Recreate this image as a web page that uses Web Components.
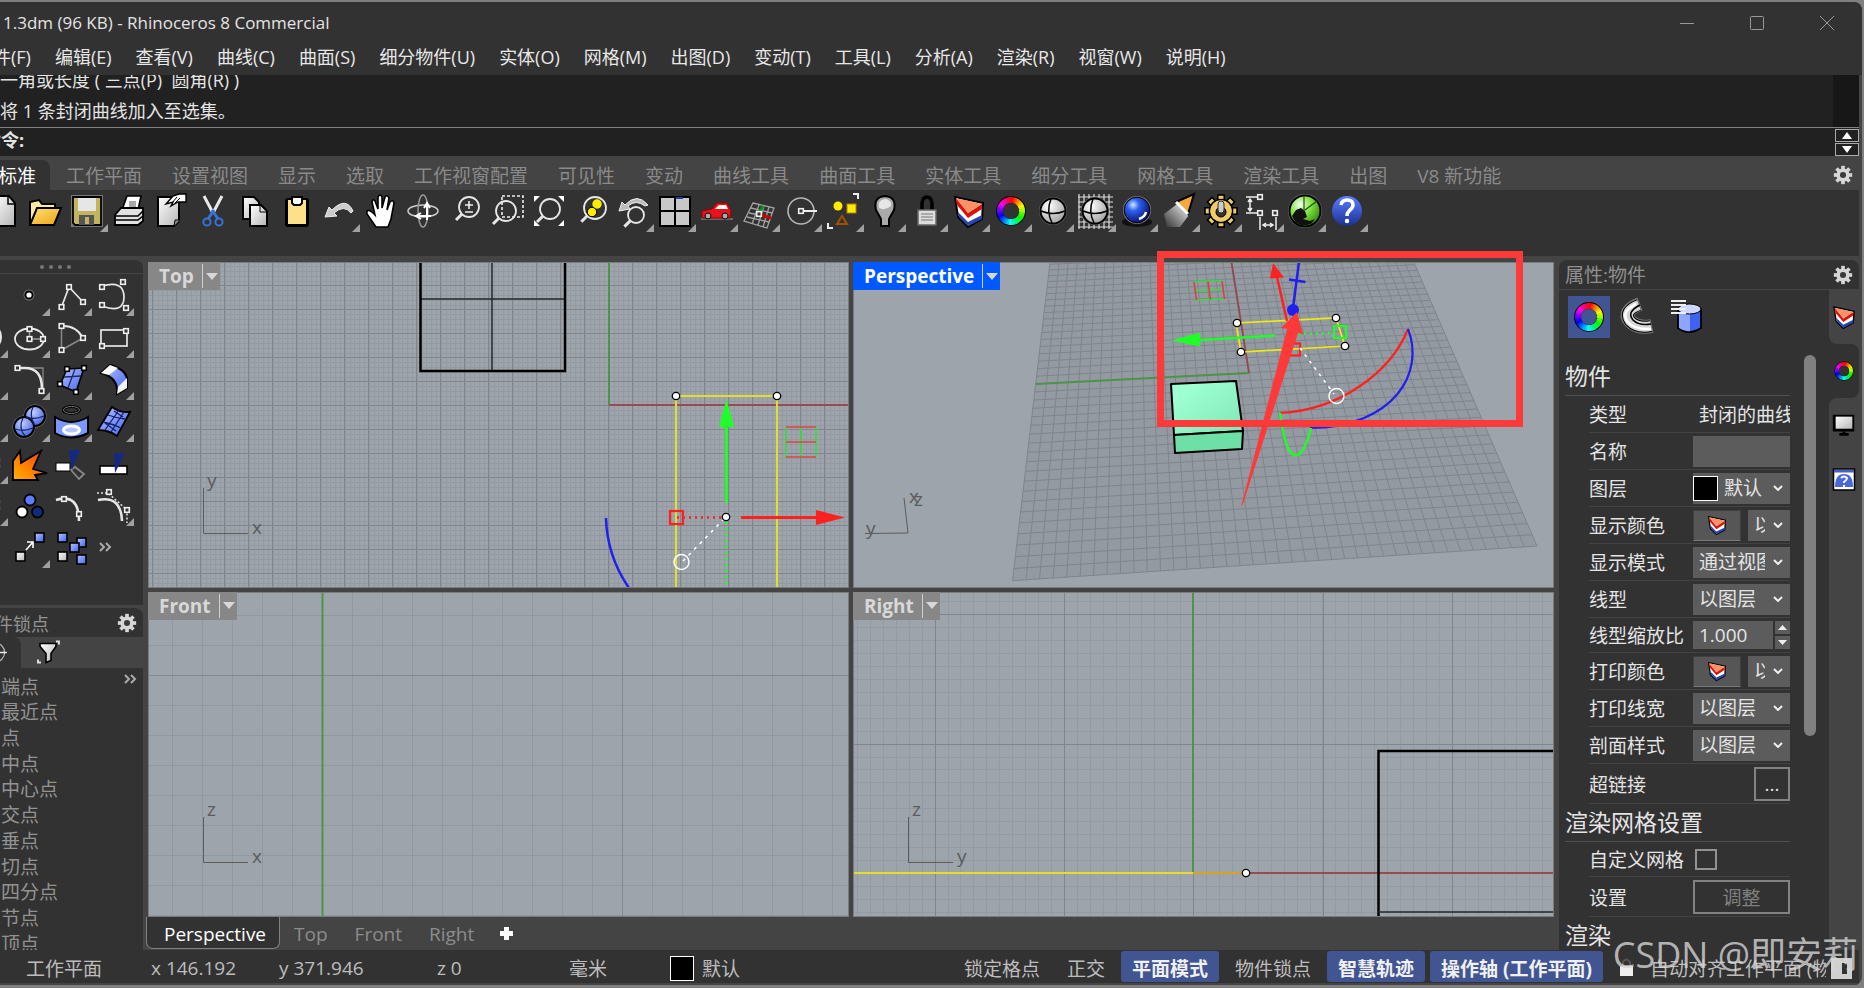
<!DOCTYPE html>
<html lang="zh-CN">
<head>
<meta charset="utf-8">
<title>1.3dm (96 KB) - Rhinoceros 8 Commercial</title>
<style>
  html, body { height: 100%; }
  body {
    margin: 0;
    overflow: hidden;
    background: #808080;
    color: #e4e4e4;
    font-family: "Open Sans", "Noto Sans CJK SC", sans-serif;
    font-size: 19px;
  }
</style>
</head>
<body>
<rhino-app></rhino-app>

<script>
(() => {
const DEFS = `
  <defs>
    <linearGradient id="blue" x1="0" y1="0" x2="1" y2="1"><stop offset="0" stop-color="#b9c6ff"/><stop offset="1" stop-color="#3f62f0"/></linearGradient>
    <linearGradient id="grey" x1="0" y1="0" x2="1" y2="1"><stop offset="0" stop-color="#fff"/><stop offset="1" stop-color="#b5b5b5"/></linearGradient>
    <linearGradient id="gold" x1="0" y1="0" x2="1" y2="1"><stop offset="0" stop-color="#ffe37a"/><stop offset="1" stop-color="#f0a010"/></linearGradient>
    <linearGradient id="fire" x1="0" y1="1" x2="1" y2="0"><stop offset="0" stop-color="#ffb400"/><stop offset="1" stop-color="#ff3c00"/></linearGradient>
    <linearGradient id="beam" x1="1" y1="0" x2="0" y2="1"><stop offset="0" stop-color="#fff"/><stop offset="1" stop-color="#fff" stop-opacity="0"/></linearGradient>
    <linearGradient id="help" x1="0" y1="0" x2="0" y2="1"><stop offset="0" stop-color="#5c7dff"/><stop offset="1" stop-color="#1a3193"/></linearGradient>
    <radialGradient id="ball" cx=".35" cy=".3" r=".8"><stop offset="0" stop-color="#cfe4ff"/><stop offset=".3" stop-color="#2d60f0"/><stop offset="1" stop-color="#04045c"/></radialGradient>
    <radialGradient id="pale" cx=".35" cy=".3" r=".8"><stop offset="0" stop-color="#fff"/><stop offset="1" stop-color="#9a9a9a"/></radialGradient>
    <radialGradient id="bball" cx=".4" cy=".3" r=".8"><stop offset="0" stop-color="#c3d0ff"/><stop offset="1" stop-color="#3455dd"/></radialGradient>
    <radialGradient id="leaf" cx=".35" cy=".3" r=".8"><stop offset="0" stop-color="#f4fff0"/><stop offset=".45" stop-color="#7fe03c"/><stop offset="1" stop-color="#2c7a08"/></radialGradient>
  </defs>`;

// square control point handles
const pts = (...list) => list.map(([x, y]) =>
  `<rect x="${x - 2.3}" y="${y - 2.3}" width="4.6" height="4.6" fill="#323232" stroke="#eee" stroke-width="1.6"/>`).join('');

// hue ring, drawn as short arcs
function wheel(r, w) {
  let out = `<circle r="${r + w / 2 + 1}" fill="#000"/>`;
  for (let i = 0; i < 36; i++) {
    const a = i * Math.PI / 18, b = (i + 1.15) * Math.PI / 18;
    out += `<path d="M${(r * Math.sin(a)).toFixed(2)} ${(-r * Math.cos(a)).toFixed(2)}A${r} ${r} 0 0 1 ${(r * Math.sin(b)).toFixed(2)} ${(-r * Math.cos(b)).toFixed(2)}" fill="none" stroke="hsl(${i * 10},100%,50%)" stroke-width="${w}"/>`;
  }
  return out + `<circle r="${r - w / 2}" fill="var(--hole, #323232)"/>`;
}

function gear(r, fill, extra = '') {
  let out = '';
  for (let i = 0; i < 8; i++) out += `<rect x="${-r * .2}" y="${-r}" width="${r * .4}" height="${r}" transform="rotate(${i * 45})" ${extra}/>`;
  return `<g fill="${fill}">${out}<circle r="${r * .72}" ${extra}/></g>`;
}

const MAG = (x, y, r) => `<circle cx="${x}" cy="${y}" r="${r}" fill="none" stroke="#e6e6e6" stroke-width="1.8"/>
  <path d="M${x - r * .7} ${y + r * .7}L${x - r * .7 - 6} ${y + r * .7 + 6}" stroke="#e6e6e6" stroke-width="3"/>`;
const CAKE = `<path d="M-14 -14L14 -8 13 8 -1 16 -11 6Z" fill="#fff" stroke="#000" stroke-width="2"/>
  <path d="M-13 -13L-1 2 13 -7V-2L-1 7 -12 -6Z" fill="#d81408"/>
  <path d="M-11 1L-1 11 13 4V8L-1 15 -10 6Z" fill="#2446b4"/><path d="M-13 -13L13 -7 -1 2Z" fill="#ff9166"/>`;
const GLOBE = `<circle r="14" fill="#666"/><circle r="12.5" fill="url(#pale)" stroke="#000" stroke-width="2"/>
  <path d="M-12 0Q0 5 12 0M-2 -12Q-7 0 -1 12" fill="none" stroke="#000" stroke-width="1.5"/>`;
const box = (x, y, fill) => `<rect x="${x}" y="${y}" width="9" height="9" fill="${fill}" stroke="#000" stroke-width="1.6"/>`;

const ICONS = {
  page: `<path d="M-10 -15H6L12 -8V15H-10Z" fill="url(#grey)" stroke="#000" stroke-width="2"/><path d="M5 -15V-7H12" fill="none" stroke="#000" stroke-width="1.5"/>`,
  folder: `<path d="M-15 14V-9L-6 -11 -3 -7H10V-3" fill="#ffe9a0" stroke="#000" stroke-width="2"/><path d="M-15 14L-8 -3H16L9 14Z" fill="url(#gold)" stroke="#000" stroke-width="2"/>`,
  save: `<rect x="-16" y="-16" width="32" height="32" fill="#777"/><path d="M-14 -14H14V14H-12L-14 12Z" fill="#c3b560" stroke="#000" stroke-width="1.8"/><rect x="-9" y="-13" width="18" height="13" fill="#e6e6e6"/><rect x="-8" y="4" width="15" height="10" fill="#555"/><rect x="-2" y="6" width="4" height="7" fill="#c3b560"/>`,
  print: `<path d="M-7 -1L-2 -15H12L9 -1Z" fill="#fff" stroke="#000" stroke-width="1.6"/><rect x="0" y="-10" width="7" height="6" fill="#aaa"/><path d="M-14 4L-8 -3H14V10L9 14H-14Z" fill="#e2e2e2" stroke="#000" stroke-width="1.8"/><path d="M-14 5H9L14 0M-14 9H9L14 5" fill="none" stroke="#000" stroke-width="1.6"/>`,
  props: `<path d="M-13 -14H8V10L3 15H-13Z" fill="url(#grey)" stroke="#000" stroke-width="2"/><path d="M3 15L4 9 9 9" fill="#888" stroke="#000"/><path d="M-5 -7L2 -15 8 -17H15V-9L7 -9 0 -5 2 -9Z" fill="#fff" stroke="#000" stroke-width="1.4"/><path d="M1 -8L6 -14M4 -8L9 -13" stroke="#000"/>`,
  cut: `<path d="M-9 -15L0 2M9 -15L0 2" stroke="#e9e9e9" stroke-width="3"/><path d="M-1 -1L5 8M1 -1L-5 8" stroke="#3673d8" stroke-width="3"/><circle cx="-6" cy="11" r="3.6" fill="none" stroke="#3673d8" stroke-width="2"/><circle cx="6" cy="11" r="3.6" fill="none" stroke="#3673d8" stroke-width="2"/>`,
  copy: `<path d="M-12 -14H-1L4 -9V8H-12Z" fill="url(#grey)" stroke="#000" stroke-width="2"/><path d="M-5 -6H6L12 0V15H-5Z" fill="url(#grey)" stroke="#000" stroke-width="2"/><path d="M5 -6V1H12" fill="none" stroke="#000"/>`,
  paste: `<rect x="-12" y="-13" width="24" height="29" rx="3" fill="#000"/><rect x="-9" y="-11" width="18" height="24" fill="#ffe08a"/><path d="M-5 -14H5V-8L3 -6H-3L-5 -8Z" fill="#fff" stroke="#000" stroke-width="2"/>`,
  undo: `<path d="M14 0Q7 -15 -7 -1L-10 -4 -14 6 -2 5 -5 2Q5 -7 12 2Z" fill="#ccc" stroke="#eee"/>`,
  hand: `<path d="M-5 16L-14 3Q-15 -3 -9 1L-6 4 -9 -9Q-8 -13 -6 -10L-3 -2 -3 -14Q-1 -18 1 -14L1 -3 4 -14Q6 -17 8 -13L6 -1 9 -9Q12 -12 13 -8L10 8 7 16Z" fill="#fff" stroke="#000" stroke-width="1.6"/>`,
  orbit: `<ellipse rx="15" ry="6" fill="none" stroke="#ccc" stroke-width="1.5"/><ellipse rx="5" ry="16" fill="none" stroke="#999" stroke-width="1.5"/><path d="M4 9V-7M1 -3L4 -8 7 -3M8 5H-6M-2 2L-7 5 -2 8" fill="none" stroke="#fff" stroke-width="2"/>`,
  zoom: MAG(4, -4, 10) + `<path d="M0 -6H8M4 -10V-2M0 1H8" stroke="#eee" stroke-width="1.6"/>`,
  zoomWindow: `<rect x="-5" y="-15" width="21" height="21" fill="none" stroke="#eee" stroke-width="1.6" stroke-dasharray="3 2"/>` + MAG(-1, 0, 10),
  zoomAll: MAG(1, -2, 10) + `<path d="M-15 -15H-9L-15 -9ZM15 -15H9L15 -9ZM-15 15H-9L-15 9ZM15 15H9L15 9Z" fill="#fff"/>`,
  zoomSel: MAG(4, -3, 11) + `<circle cx="6" cy="-7" r="4.7" fill="#ffec00"/><circle cx="1" cy="1" r="4.7" fill="#ffec00" stroke="#000"/>`,
  undoView: `<path d="M15 -6Q4 -19 -8 -6L-11 -9 -14 0 -3 -2 -5 -5Q3 -12 12 -5Z" fill="#bbb" stroke="#eee"/>` + MAG(3, 4, 8),
  views: `<rect x="-16" y="-15" width="32" height="31" fill="#777"/><rect x="-15" y="-14" width="30" height="29" fill="#c8c8c8" stroke="#000" stroke-width="2"/><path d="M0 -14V15M-15 0H15" stroke="#000" stroke-width="2"/><path d="M1 -13H8" stroke="#1c3fa8" stroke-width="2"/>`,
  car: `<path d="M-16 8H16" stroke="#666" stroke-width="2"/><path d="M-15 6V0L-5 -2 0 -8H10L14 0 13 7H-14Z" fill="#e8121b" stroke="#900"/><path d="M-2 -2L2 -6H9L11 -2Z" fill="#fff"/><circle cx="-9" cy="5" r="3" fill="#aaa" stroke="#000"/><circle cx="8" cy="5" r="3" fill="#aaa" stroke="#000"/>`,
  cplane: `<g fill="none" stroke="#a2a2a2" stroke-width="1.3"><path d="M-6 -8L15 -3 8 17 -15 10ZM-8 -3L13 2M-10 2L12 6M-12 6L10 11M0 -6L-7 13M5 -5L-1 14M10 -4L4 16"/></g><path d="M0 2L4 -5" stroke="#0a8f18" stroke-width="3"/><path d="M2 4L12 7" stroke="#c80000" stroke-width="3"/>` + pts([0, 3]),
  target: `<circle cx="0" cy="0" r="13" fill="none" stroke="#b5b5b5" stroke-width="1.6"/><path d="M0 0H16" stroke="#eee" stroke-width="2"/>` + pts([0, 0]),
  select: `<circle cx="-5" cy="-5" r="4.5" fill="#ffec00"/><rect x="4" y="-7" width="9" height="9" fill="#ffec00" stroke="#b88000"/><path d="M-6 13L-1 5 4 13Z" fill="none" stroke="#a05000" stroke-width="2"/><path d="M10 -17H15V-12M-15 12V17H-10" fill="none" stroke="#eee" stroke-width="2"/>`,
  bulb: `<path d="M-4 15V8L-9 -1Q-12 -14 0 -15 12 -14 9 -1L4 8V15Z" fill="#aaa" stroke="#000" stroke-width="2"/><path d="M-6 -3Q-8 -11 0 -12 7 -11 6 -5Q0 0 -6 -3Z" fill="#fff" opacity=".7"/>`,
  lock: `<path d="M-5 0V-8Q-4 -14 0 -14T5 -8V0" fill="none" stroke="#000" stroke-width="3.5"/><rect x="-9" y="-1" width="18" height="15" fill="#ddd" stroke="#666" stroke-width="1.5"/><path d="M-6 3H6M-6 6H6M-6 9H6" stroke="#777"/>`,
  cake: CAKE,
  wheel: wheel(11, 6),
  globe: GLOBE,
  globeGrid: `<path d="M-17 -14H18M-17 -9H18M-17 -4H18M-17 1H18M-17 6H18M-17 11H18M-17 16H18M-16 -17V18M-11 -17V18M-6 -17V18M-1 -17V18M4 -17V18M9 -17V18M14 -17V18" stroke="#ddd" stroke-width="1.2"/>` + GLOBE,
  ball: `<ellipse cy="11" rx="15" ry="5" fill="#111"/><circle r="14" cy="-1" fill="#777"/><circle cy="-1" r="12.8" fill="url(#ball)" stroke="#000"/><path d="M2 8Q8 6 9 1" stroke="#fff" stroke-width="2.5" fill="none"/>`,
  spot: `<path d="M2 -10L10 4 1 16H-12L-15 3Z" fill="url(#beam)"/><path d="M-3 -9L15 -17 9 3Z" fill="#f5a93a" stroke="#000" stroke-width="2"/><path d="M-3 -9L9 3" stroke="#fff" stroke-width="3"/>`,
  gear: gear(16, '#f0cc66', 'stroke="#000" stroke-width="1.6"') + `<circle r="10.5" fill="#f0cc66"/><circle r="5" cy="1" fill="#333" stroke="#000"/><rect x="-3" y="-10" width="6" height="12" rx="3" fill="#ccc" stroke="#333"/>`,
  dims: `<path d="M-17 -14H-4M-17 2H-4M-13 -11V-1M-15 -9L-13 -12 -11 -9M-15 -3L-13 0 -11 -3M-3 6V19M13 6V19M0 14H10M3 12L0 14 3 16M7 12L10 14 7 16" fill="none" stroke="#eee" stroke-width="1.5"/>` + pts([-3, -14], [-3, 2], [12, 2]),
  hopper: `<circle r="17" fill="#777"/><circle r="15.5" fill="url(#leaf)" stroke="#000" stroke-width="2"/><path d="M-9 -1L-4 -3 0 0 2 6 -2 8 5 10 10 8 6 13Q-8 18 -13 5Z" fill="#111"/><path d="M-1 0V-14M0 -1L12 -10" stroke="#1b5206" stroke-width="1.2"/>`,
  help: `<circle r="15" fill="url(#help)"/><path d="M-6 -6Q-5 -11 0 -11 6 -11 6 -6 6 -3 2 0 0 2 0 5" fill="none" stroke="#fff" stroke-width="3.5"/><circle cy="10" r="2.2" fill="#fff"/>`,

  arrow: `<path d="M-10 -10L6 5H-3L-8 12Z" fill="#fff"/>`,
  point: `<circle r="5.5" fill="#777"/><circle r="3.6" fill="#fff" stroke="#000" stroke-width="2"/>`,
  polyline: `<path d="M-9.5 12L-2 -8 12 7" fill="none" stroke="#e6e6e6" stroke-width="1.7"/>` + pts([-9.5, 12], [-2, -8], [12, 7]),
  curve: `<path d="M-11 -9Q11 -15 11 2T-11 11" fill="none" stroke="#e6e6e6" stroke-width="1.7"/>` + pts([-11, -8], [10, -13], [-11, 10], [13, 13]),
  circle: `<circle r="14" fill="none" stroke="#e6e6e6" stroke-width="2"/>`,
  ellipse: `<ellipse cx=".5" cy="2" rx="14.5" ry="10.5" fill="none" stroke="#e6e6e6" stroke-width="1.8"/><path d="M.5 -8V2H14" fill="none" stroke="#999" stroke-width="1.5"/>` + pts([.5, -8], [.5, 2], [14, 2]),
  arc: `<path d="M-9.5 13V-11" stroke="#888" stroke-width="1.5"/><path d="M-9.5 13L12 1" stroke="#888" stroke-width="1.5"/><path d="M-9.5 -11Q5 -12 12 1" fill="none" stroke="#e6e6e6" stroke-width="2"/>` + pts([-9.5, -11], [12, 1], [-9.5, 13]),
  rect: `<rect x="-12" y="-7" width="26" height="16" fill="none" stroke="#e6e6e6" stroke-width="1.7"/>` + pts([13, -6], [-11, 9]),
  fillet: `<path d="M-2 -11H14V10" fill="none" stroke="#888" stroke-width="1.3"/><path d="M-10 -11H-4Q13 -11 13 10" fill="none" stroke="#e6e6e6" stroke-width="2.6"/>` + pts([-11.5, -11], [12.5, 12]),
  surface: `<path d="M-4 -10L13 -11 5 13 -11 6Z" fill="url(#blue)" stroke="#000" stroke-width="1.6"/><path d="M4 -10L-3 9M-7 -2L10 -3" stroke="#222a66" stroke-width="1.3"/>` + pts([-4, -10], [13, -11], [-11, 5], [5, 13]).replace(/#323232/g, '#fff').replace(/#eee/g, '#000'),
  loft: `<path d="M-12 -6L-3 -14Q12 -10 14 -1V9L4 15Q6 -1 -12 -6Z" fill="url(#blue)" stroke="#000" stroke-width="2"/><path d="M-12 -6L-3 -14 5 -11 -4 -4Z" fill="#fff"/><path d="M4 15L5 8 14 -1V9Z" fill="#f2f2f2"/>`,
  spheres: `<circle cx="6" cy="-5" r="11.5" fill="#777"/><circle cx="-5" cy="6" r="11.5" fill="#777"/><circle cx="6" cy="-5" r="10" fill="url(#bball)" stroke="#000" stroke-width="2"/><circle cx="-5" cy="6" r="10" fill="url(#bball)" stroke="#000" stroke-width="2"/><path d="M-14 8Q-5 11 4 7M-6 -3Q-11 7 -4 15M-3 -4Q6 -1 15 -5M4 -14Q0 -6 5 3" fill="none" stroke="#15206a" stroke-width="1.2"/>`,
  project: `<ellipse cx=".5" cy="-11" rx="8" ry="3.5" fill="none" stroke="#000" stroke-width="3"/><ellipse cx=".5" cy="-11" rx="8" ry="3.5" fill="none" stroke="#777" stroke-width="1"/><path d="M-16 -4Q0 6 17 -4V12Q0 21 -16 12Z" fill="#7a98ff" stroke="#000" stroke-width="2"/><ellipse cx=".5" cy="9" rx="8" ry="4" fill="#b7c6ff" stroke="#fff" stroke-width="3"/>`,
  mesh: `<path d="M-15 9L-1 -14Q7 -8 17 -9L4 15Q-4 9 -15 9Z" fill="url(#blue)" stroke="#000" stroke-width="1.8"/><path d="M-10 1Q0 3 8 7M-5 -6Q3 -3 12 -2M6 -11L-8 9M11 -9L-2 11M1 -10L10 -4M-8 2L3 10" fill="none" stroke="#15206a" stroke-width="1.3"/>`,
  explode: `<path d="M-16 17V-2L-9 -12 -8 0 12 -12 4 6 18 10 6 12 9 17Z" fill="url(#fire)" stroke="#000" stroke-width="1.8"/>`,
  trim: `<rect x="-15" y="0" width="14" height="8" fill="#fff" stroke="#000"/><path d="M0 7L4 4 13 11 8 16Z" fill="none" stroke="#888" stroke-width="1.8"/><path d="M-2 -13H9L1 7Z" fill="#142a80"/>`,
  split: `<rect x="-13" y="3" width="27" height="8" fill="#fff" stroke="#000" stroke-width="1.6"/><path d="M1 -10H12L2 10Z" fill="#142a80"/>`,
  group: `<circle cx="1" cy="-5" r="5.5" fill="#5c7dff" stroke="#000" stroke-width="1.8"/><circle cx="-7" cy="7" r="5.5" fill="#fff" stroke="#000" stroke-width="1.8"/><circle cx="8.5" cy="7" r="5.5" fill="#142a80" stroke="#000" stroke-width="1.8"/>`,
  editPts: `<path d="M-15 -5Q8 -12 8 16" fill="none" stroke="#e6e6e6" stroke-width="2.6"/>` + pts([-7, -6], [8, 9]),
  rebuild: `<path d="M-15 -5Q8 -10 9 16" fill="none" stroke="#e6e6e6" stroke-width="2.6"/><path d="M-16 -12H-5L14 5V18" fill="none" stroke="#ddd" stroke-width="1.6" stroke-dasharray="2 2"/>` + pts([-4, -13], [14, 5]),
  move: box(-13, 5, 'url(#grey)') + box(6, -14, 'url(#blue)') + `<path d="M-3 3L4 -5M-2 -5H4V1" fill="none" stroke="#fff" stroke-width="1.6"/>`,
  array: box(-13, -14, 'url(#blue)') + box(6, -9, 'url(#blue)') + box(-1, -4, 'url(#blue)') + box(-13, 5, 'url(#grey)') + box(6, 8, 'url(#blue)'),
  more: `<path d="M-13 -4L-9 0 -13 4M-7 -4L-3 0 -7 4" fill="none" stroke="#aaa" stroke-width="2"/>`,
  blank: `<rect x="-10" y="-9" width="23" height="17" rx="2" fill="#777"/>`,

  cog: gear(12, '#d6d6d6') + `<circle r="4" fill="#3a3a3a"/>`,
  filter: `<path d="M-8 -9H8V-6L3 1V8L-2 10V1L-8 -6Z" fill="url(#grey)" stroke="#000" stroke-width="1.6"/><path d="M8 -11H11V-8M-10 7V10H-7" fill="none" stroke="#ddd" stroke-width="2"/>`,
  pipe: `<g fill="none"><path d="M3 -13Q-15 -6 -7 4 1 12 15 9" stroke="#777" stroke-width="14"/><path d="M2 -12Q-14 -6 -7 4 1 12 14 9" stroke="#000" stroke-width="12"/><path d="M2 -12Q-14 -6 -7 4 1 12 14 9" stroke="#d6d6d6" stroke-width="10"/><path d="M-1 -13Q-16 -6 -10 4 -3 13 14 12" stroke="#fff" stroke-width="2.5"/><path d="M3 -12Q-11 -5 -4 3 2 9 14 7" stroke="#000" stroke-width="1.6"/></g>`,
  cylinder: `<path d="M-7 -8V11Q4 19 16 11V-8Z" fill="#3f62f0" stroke="#000" stroke-width="1.8"/><path d="M-6 -7V11Q0 15 5 14V-5Z" fill="#8fa5ff"/><ellipse cx="4.5" cy="-8" rx="11.5" ry="5" fill="#cdd7ff" stroke="#000"/><path d="M-14 -16H1M-14 -12H1M-14 -8H1M-14 -4H1" stroke="#eee" stroke-width="1.8"/>`,
  monitor: `<rect x="-12" y="-11" width="23" height="18" fill="#000"/><rect x="-9" y="-9" width="18" height="13" fill="url(#grey)"/><path d="M-5 10H5M0 7V11" stroke="#000" stroke-width="3"/>`,
  helpPane: `<rect x="-10.5" y="-10" width="21" height="21" fill="#fff" stroke="#000" stroke-width="1.5"/><rect x="-10" y="-9" width="20" height="2.5" fill="#4a5fc4"/><path d="M-9 8Q-9 -5 0 -5T9 8Z" fill="#4a68dc"/><path d="M-3 -1Q0 -4 3 -1 3 1 0 3V4M0 6V8" fill="none" stroke="#fff" stroke-width="2"/>`
};

function define(name, html) {
  customElements.define(name, class extends HTMLElement {
    connectedCallback() {
      if (this.shadowRoot) return;
      this.attachShadow({ mode: 'open' });
      this.shadowRoot.innerHTML = typeof html === 'function' ? html(this) : html;
    }
  });
}

define('rhino-icon', el => `
  <style>
    :host { display: block; width: 42px; height: 42px; flex: none; }
    svg { display: block; width: 100%; height: 100%; overflow: visible; }
  </style>
  <svg viewBox="-21 -21 42 42" aria-hidden="true">${DEFS}
    <g transform="scale(${el.getAttribute('scale') || 1})">${ICONS[el.getAttribute('name')]}</g>
  </svg>`);

define('rhino-tool', el => `
  <style>
    :host { display: block; flex: none; }
    button { display: block; position: relative; width: 42px; height: 42px; padding: 0; border: 0; background: none; }
    i { position: absolute; right: 0; bottom: 0; border-style: solid; border-width: 0 0 8px 8px; border-color: transparent transparent #a0a0a0; }
  </style>
  <button aria-label="${el.getAttribute('name')}"><rhino-icon name="${el.getAttribute('name')}"></rhino-icon>${el.hasAttribute('more') ? '<i></i>' : ''}</button>`);

// "name+" marks a tool with a fly-out
const tools = list => list.split(' ').map(t => `<rhino-tool name="${t.replace('+', '')}"${t.endsWith('+') ? ' more' : ''}></rhino-tool>`).join('');

define('rhino-titlebar', `
  <style>
    :host { display: flex; align-items: center; height: 41px; padding-left: 3px; font-size: 17px; }
    span { flex: 1; }
    button { width: 70px; height: 40px; padding: 0; border: 0; background: none; }
    svg { display: block; margin: auto; }
  </style>
  <span>1.3dm (96 KB) - Rhinoceros 8 Commercial</span>
  <button aria-label="minimize"><svg width="16" height="16" fill="none" stroke="#999"><path d="M1 8.5H15"/></svg></button>
  <button aria-label="maximize"><svg width="16" height="16" fill="none" stroke="#999"><rect x="1.5" y="1.5" width="13" height="13" rx="1"/></svg></button>
  <button aria-label="close"><svg width="16" height="16" fill="none" stroke="#999"><path d="M1 1L15 15M15 1L1 15"/></svg></button>`);

define('rhino-menubar', `
  <style>
    :host { display: block; height: 32px; }
    nav { display: flex; gap: 24px; margin-left: -25px; }
    a { color: #e8e8e8; text-decoration: none; font-size: 18px; line-height: 28px; white-space: nowrap; }
  </style>
  <nav>${'文件(F) 编辑(E) 查看(V) 曲线(C) 曲面(S) 细分物件(U) 实体(O) 网格(M) 出图(D) 变动(T) 工具(L) 分析(A) 渲染(R) 视窗(W) 说明(H)'.split(' ').map(m => `<a href="#">${m}</a>`).join('')}</nav>`);

define('rhino-command', `
  <style>
    :host { display: block; margin-right: 3px; background: #212121; font-size: 18px; }
    .history { height: 52px; display: flex; border-bottom: 1px solid #808080; overflow: hidden; }
    .lines { flex: 1; display: flex; flex-direction: column; justify-content: flex-end; line-height: 31px; white-space: pre; }
    .track { width: 26px; background: #171717; }
    .prompt { display: flex; align-items: center; height: 28px; line-height: 24px; font-weight: bold; }
    label { margin-left: -17px; padding-bottom: 4px; }
    input { flex: 1; height: 24px; border: 0; outline: 0; background: none; color: inherit; font: inherit; }
    .step { display: grid; gap: 1px; width: 24px; }
    button { height: 13px; padding: 0; border: 1px solid #aaa; background: #212121; display: grid; place-items: center; }
  </style>
  <div class="history"><div class="lines"><div>一角或长度 ( 三点(P)  圆角(R) )</div><div>将 1 条封闭曲线加入至选集。</div></div><div class="track"></div></div>
  <div class="prompt"><label for="cmd">指令:</label><input id="cmd">
    <div class="step">
      <button aria-label="up"><svg width="10" height="7"><path d="M5 0L10 7H0Z" fill="#fff"/></svg></button>
      <button aria-label="down"><svg width="10" height="7"><path d="M5 7L10 0H0Z" fill="#fff"/></svg></button>
    </div>
  </div>`);

define('rhino-toolbar', `
  <style>
    :host { display: block; margin-right: 3px; }
    .tabs { display: flex; height: 34px; background: #444; }
    .tabs a { color: #8a8a8a; text-decoration: none; line-height: 40px; margin-right: 30px; white-space: nowrap; }
    .tabs a.on { width: 50px; height: 30px; margin: 4px 16px 0 0; line-height: 32px; text-indent: -2px; background: #323232; color: #fff; border-radius: 0 8px 0 0; }
    .tabs rhino-icon { width: 32px; height: 38px; margin-left: auto; }
    .icons { display: flex; height: 66px; background: #323232; }
    .icons > :first-child { margin-left: -18px; }
  </style>
  <div class="tabs"><a class="on" href="#">标准</a>${'工作平面,设置视图,显示,选取,工作视窗配置,可见性,变动,曲线工具,曲面工具,实体工具,细分工具,网格工具,渲染工具,出图,V8 新功能'.split(',').map(t => `<a href="#">${t}</a>`).join('')}<rhino-icon name="cog"></rhino-icon></div>
  <div class="icons">${tools('page folder save+ print props cut copy paste undo+ hand orbit zoom zoomWindow zoomAll zoomSel undoView+ views+ car+ cplane+ target+ select+ bulb+ lock+ cake+ wheel+ globe+ globeGrid+ ball+ spot+ gear+ dims+ hopper+ help+')}</div>`);

define('rhino-toolbox', `
  <style>
    :host { display: block; height: 345px; background: #323232; border-radius: 0 8px 0 0; overflow: hidden; }
    .grip { display: flex; justify-content: center; gap: 5px; padding: 5px 32px 4px 0; border-bottom: 1px solid #444; }
    .grip i { width: 4px; height: 4px; background: #777; border-radius: 2px; }
    .grid { display: grid; grid-template-columns: repeat(4, 42px); margin-left: -34px; }
  </style>
  <div class="grip"><i></i><i></i><i></i><i></i></div>
  <div class="grid">${tools('arrow point+ polyline+ curve+ circle+ ellipse+ arc+ rect+ blank+ fillet+ surface+ loft+ blank+ spheres+ project+ mesh+ globe+ explode trim split globe+ group editPts rebuild+ blank move+ array more')}</div>`);

define('rhino-osnap', `
  <style>
    :host { display: flex; flex-direction: column; flex: 1; min-height: 0; background: #323232; border-radius: 0 8px 0 0; overflow: hidden; color: #929292; }
    header { display: flex; align-items: center; justify-content: space-between; height: 29px; font-size: 18px; }
    header span { margin-left: -23px; }
    header rhino-icon { width: 32px; height: 32px; }
    .tabs { display: flex; height: 31px; background: #444; }
    .tabs button { border: 0; padding: 0; width: 54px; height: 31px; background: none; }
    .tabs .on { width: 21px; background: #323232; border-radius: 0 8px 0 0; }
    .tabs rhino-icon { width: 54px; height: 31px; }
    .tabs .on rhino-icon { width: 42px; margin-left: -26px; }
    .body { display: flex; flex: 1; min-height: 0; padding-top: 5px; }
    ul { flex: 1; display: flex; flex-direction: column; margin: 0 0 -6px -22px; padding: 0; list-style: none; }
    li { flex: 1; min-height: 0; }
    label { display: flex; align-items: center; height: 25px; gap: 7px; white-space: nowrap; }
    input { margin: 0; width: 16px; height: 16px; }
  </style>
  <header><span>物件锁点</span><rhino-icon name="cog"></rhino-icon></header>
  <div class="tabs"><button class="on" aria-label="osnap"><rhino-icon name="target"></rhino-icon></button><button aria-label="filter"><rhino-icon name="filter" scale="1.35"></rhino-icon></button></div>
  <div class="body">
    <ul>${'端点 最近点 点 中点 中心点 交点 垂点 切点 四分点 节点 顶点'.split(' ').map(s => `<li><label><input type="checkbox">${s}</label></li>`).join('')}</ul>
    <svg width="20" height="11" fill="none" stroke="#aaa" stroke-width="2"><path d="M2 2L6 6 2 10M8 2L12 6 8 10"/></svg>
  </div>`);

// horizontal and vertical lines for the flat views; coordinates share the canvas origin
function lines(x0, y0, step, color) {
  let d = '';
  for (let x = x0; x < 1600; x += step) d += `M${Math.round(x) + .5} 250V930`;
  for (let y = y0; y < 930; y += step) d += `M140 ${Math.round(y) + .5}H1600`;
  return `<path d="${d}" fill="none" stroke="${color}"/>`;
}

// construction plane seen in perspective: maps the unit square on its near half
function plane() {
  const [x0, y0, x1, y1, x2, y2, x3, y3] = [1012.5, 580.7, 1537, 546, 1457, 361.7, 1035.7, 384];
  const dx1 = x1 - x2, dx2 = x3 - x2, sx = x0 - x1 + x2 - x3;
  const dy1 = y1 - y2, dy2 = y3 - y2, sy = y0 - y1 + y2 - y3;
  const det = dx1 * dy2 - dx2 * dy1;
  const g = (sx * dy2 - dx2 * sy) / det, h = (dx1 * sy - sx * dy1) / det;
  const at = (s, t) => {
    const w = g * s + h * t + 1;
    return ((x1 - x0 + g * x1) * s + (x3 - x0 + h * x3) * t + x0) / w + ' ' + ((y1 - y0 + g * y1) * s + (y3 - y0 + h * y3) * t + y0) / w;
  };
  let d = '';
  for (let i = 0; i <= 40; i++) d += `M${at(i / 40, 0)}L${at(i / 40, 2)}M${at(0, i / 20)}L${at(1, i / 20)}`;
  return `<path d="M${at(0, 0)}L${at(1, 0)}L${at(1, 2)}L${at(0, 2)}Z" fill="#949aa1"/><path d="${d}" fill="none" stroke="#80858d"/>`;
}

const knob = (x, y) => `<circle cx="${x}" cy="${y}" r="3.7" fill="#fff" stroke="#000" stroke-width="1.3"/>`;
const axes = (x, y, up, right) => `<path d="M${x + .5} ${y - 45}V${y + .5}H${x + 45}" fill="none" stroke="#5c5c5c"/>
  <text x="${x + 4}" y="${y - 46}">${up}</text><text x="${x + 49}" y="${y + 1}">${right}</text>`;

const SCENES = {
  Top: lines(148, 261.3, 4.8, '#939aa1') + lines(152, 261, 24, '#81858e') + `
    <g fill="none">
      <path d="M609 262V405" stroke="#4b9448" stroke-width="2"/><path d="M609 405H850" stroke="#984b50" stroke-width="2"/>
      <path d="M492 262V371M420 299H565" stroke="#202828" stroke-width="1.5"/><path d="M420.5 262V371H565V262" stroke="#000" stroke-width="2.5"/>
      <path d="M676 590V396H777V590" stroke="#e2df2c" stroke-width="2"/>
      <path d="M786 427V457M801 427V457M816 427V457" stroke="#37dc3a" stroke-width="1.6"/><path d="M786 427H816M786 442H816M786 457H816" stroke="#e04444" stroke-width="1.6"/>
      <path d="M606 518Q607 556 629 588" stroke="#2020ee" stroke-width="2.5"/>
      <path d="M726.5 420V503" stroke="#1eff28" stroke-width="3"/><path d="M726.5 522V590" stroke="#1eff28" stroke-width="3" stroke-dasharray="2 4"/>
      <path d="M741 517.5H820" stroke="#ff2020" stroke-width="3"/><path d="M677 517.5H722" stroke="#ff2020" stroke-width="2.5" stroke-dasharray="2 4"/>
      <rect x="670" y="511" width="13" height="13" stroke="#ff2020" stroke-width="2.2"/>
      <path d="M683 561L724 519" stroke="#fff" stroke-width="1.6" stroke-dasharray="3 5"/><circle cx="681.5" cy="562" r="7.5" stroke="#fff" stroke-width="1.4"/>
    </g>
    <path d="M726.5 399L734 427H719Z" fill="#1eff28"/><path d="M845 517.5L816 510V525Z" fill="#ff2020"/>` + knob(676, 396) + knob(777, 396) + knob(726, 517) + axes(203, 533, 'y', 'x'),
  Perspective: plane() + `
    <g fill="none">
      <path d="M1231.4 262L1249 373" stroke="#90494f" stroke-width="1.8"/><path d="M1035.7 384L1249 373" stroke="#4b9448" stroke-width="1.8"/>
      <path d="M1236 323L1336 318 1345 346 1241 352Z" stroke="#efea12" stroke-width="1.7"/>
      <path d="M1194 281.5L1222 280.5M1196 290.5L1222 289.5M1196 300L1225 298.5" stroke="#37dc3a" stroke-width="1.5"/><path d="M1194 282L1196.5 300M1208 281.5L1210.5 299.5M1222 281L1224.5 299" stroke="#e03a3a" stroke-width="1.5"/>
      <path d="M1275 335.5L1199 340" stroke="#1eff28" stroke-width="2.5"/><path d="M1298 334L1332 333" stroke="#1eff28" stroke-width="2.5" stroke-dasharray="2 4"/><rect x="1334" y="326" width="12" height="12" stroke="#1eff28" stroke-width="2.2"/>
      <path d="M1287 321L1277 277" stroke="#ff2020" stroke-width="2.5"/><rect x="1288" y="343.5" width="12" height="12" stroke="#ff2020" stroke-width="2.2"/>
      <path d="M1299 262L1293 308M1289 279.5L1305.5 282" stroke="#2020ee" stroke-width="2.5"/>
      <path d="M1300 348L1334 394" stroke="#fff" stroke-width="1.6" stroke-dasharray="3 5"/>
      <path d="M1280 413C1340 410 1391 372 1408 329" stroke="#ff2020" stroke-width="2.2"/>
      <path d="M1408 329C1425 372 1395 427 1310 428" stroke="#2020ee" stroke-width="2.2"/>
      <path d="M1280 413C1287 467 1301 467 1311 428" stroke="#1eff28" stroke-width="2.5"/>
      <circle cx="1336.5" cy="396" r="7.5" stroke="#fff" stroke-width="1.4"/>
    </g>
    <path d="M1171.5 340.5L1200 332.5V346.5Z" fill="#1eff28"/><path d="M1273 263L1284 277.5 1270 278.5Z" fill="#ff2020"/><circle cx="1293" cy="310" r="6" fill="#2020ee"/>
    <linearGradient id="mint" x1="0" y1="0" x2="1" y2="1"><stop offset="0.2" stop-color="#9dffd2"/><stop offset="1" stop-color="#7fe6b6"/></linearGradient>
    <g stroke="#000" stroke-width="2" stroke-linejoin="round"><path d="M1171 384L1236 381 1243 431 1174 435Z" fill="url(#mint)"/><path d="M1174 435L1243 431 1242 449 1175 453Z" fill="#6fdfa8"/></g>` +
    knob(1237, 323) + knob(1336, 318) + knob(1241, 352) + knob(1345, 346) + `
    <path d="M865 533.5L908 533L904 498" fill="none" stroke="#5c5c5c"/><text x="866" y="535">y</text><text x="909" y="503">x</text><text x="914" y="506">z</text>`,
  Front: lines(142.3, 615.3, 30, '#9198a0') + `<path d="M149 675.5H850M622.5 590V920" stroke="#848891"/><path d="M322.5 590V920" stroke="#4b9448" stroke-width="2"/>` + axes(203, 862, 'z', 'x'),
  Right: lines(857, 601.4, 12.93, '#939aa1') + lines(934.6, 614.3, 129.3, '#81858e') + `
    <path d="M1193 592V873" stroke="#4b9448" stroke-width="2"/><path d="M1246 873H1556" stroke="#984b50" stroke-width="2"/><path d="M853 873H1193" stroke="#e2df2c" stroke-width="2.2"/><path d="M1193 873H1246" stroke="#d6a520" stroke-width="2"/>
    <path d="M1556 751H1378.5V920" fill="none" stroke="#000" stroke-width="2.5"/><path d="M1378 912H1556" stroke="#202828" stroke-width="1.5"/>` + knob(1246, 873) + axes(908, 862, 'z', 'y')
};

define('rhino-viewport', el => {
  const name = el.getAttribute('name');
  return `
  <style>
    :host { display: block; position: relative; min-width: 0; border: 1px solid #7b7b7b; background: #9da4ab; }
    .canvas { position: absolute; inset: 0; overflow: hidden; }
    .canvas svg { display: block; width: 100%; height: 100%; }
    text { font-size: 19px; fill: #5c5c5c; }
    .title { position: absolute; left: -1px; top: -1px; display: flex; align-items: center; height: 28px; padding: 0 2px 0 11px; border: 0; background: #878787; color: #d8d8d8; font: bold 19px "Open Sans", sans-serif; }
    :host([active]) .title { background: #0059ff; color: #fff; }
    .title i { width: 1px; height: 24px; margin: 0 3px 0 8px; background: #d0d0d0; }
  </style>
  <div class="canvas"><svg><g transform="translate(-${el.getAttribute('ox')} -${el.getAttribute('oy')})">${SCENES[name]}</g></svg></div>
  <button class="title">${name}<i></i><svg width="12" height="7"><path d="M0 0H12L6 7Z" fill="#d8d8d8"/></svg></button>
  <slot></slot>`;
});

// red box and arrow laid over the perspective view
define('rhino-callout', `
  <style>
    :host { position: absolute; left: 303px; top: -12px; width: 366px; height: 260px; pointer-events: none; }
    svg { display: block; }
  </style>
  <svg width="366" height="260"><rect x="3.5" y="3.5" width="359" height="169" fill="none" stroke="#fe3939" stroke-width="7"/>
    <path d="M140 61L146 83 141 82 86 253 84 256 130 78 124 77Z" fill="#fe3939"/></svg>`);

define('rhino-views', `
  <style>
    :host { display: flex; flex-direction: column; flex: 1; min-width: 0; padding: 6px 5px 0; }
    .grid { flex: 1; display: grid; grid-template: 1fr 1fr / 1fr 1fr; gap: 4px; min-height: 0; }
    nav { display: flex; height: 33px; margin-left: -2px; }
    nav a { color: #8c8c8c; text-decoration: none; line-height: 34px; margin-left: 27px; }
    nav a.on { box-sizing: border-box; height: 32px; margin: 0 -13px 0 0; padding: 0 13px 0 17px; border: 1px solid #808080; border-top: 0; border-radius: 0 0 7px 7px; background: #323232; color: #fff; }
    button { margin-left: 20px; padding: 2px 0 0; width: 24px; border: 0; background: none; }
  </style>
  <div class="grid">
    <rhino-viewport name="Top" ox="149" oy="263"></rhino-viewport>
    <rhino-viewport name="Perspective" active ox="854" oy="263"><rhino-callout></rhino-callout></rhino-viewport>
    <rhino-viewport name="Front" ox="149" oy="593"></rhino-viewport>
    <rhino-viewport name="Right" ox="854" oy="593"></rhino-viewport>
  </div>
  <nav><a class="on" href="#">Perspective</a><a href="#">Top</a><a href="#">Front</a><a href="#">Right</a>
    <button aria-label="new view"><svg width="13" height="13"><path d="M6.5 0V13M0 6.5H13" stroke="#fff" stroke-width="5"/></svg></button></nav>`);

let uid = 0;
define('rhino-field', el => {
  const id = 'f' + uid++, kind = el.getAttribute('kind'), value = el.getAttribute('value') || '';
  const select = `<span class="drop"><select id="${id}"><option>${value}</option></select><svg width="10" height="6" fill="none" stroke="#eee" stroke-width="2"><path d="M1 1L5 5 9 1"/></svg></span>`;
  const control = {
    text: `<output id="${id}">${value}</output>`,
    input: `<input id="${id}" type="text">`,
    select,
    layer: `<span class="layer"><i></i>${select}</span>`,
    color: `<button class="swatch" aria-label="color"><rhino-icon name="cake" scale="0.9"></rhino-icon></button>${select}`,
    number: `<span class="num"><input id="${id}" type="text" value="${value}"><span><button aria-label="more"><svg width="9" height="5"><path d="M4.5 0L9 5H0Z" fill="#eee"/></svg></button><button aria-label="less"><svg width="9" height="5"><path d="M0 0H9L4.5 5Z" fill="#eee"/></svg></button></span></span>`,
    dots: `<button class="line dots" id="${id}">...</button>`,
    check: `<input id="${id}" type="checkbox">`,
    button: `<button class="line wide" id="${id}">${value}</button>`
  }[kind];
  return `
  <style>
    :host { display: flex; align-items: center; box-sizing: border-box; height: 37px; margin-left: 24px; border-bottom: 1px solid #434343; }
    :host([kind=number]), :host([kind=check]) { height: 35px; }
    :host([kind=dots]), :host([kind=button]) { height: 40px; }
    label { width: 104px; flex: none; white-space: nowrap; }
    .box { flex: 1; min-width: 0; display: flex; align-items: center; gap: 7px; }
    input, select, button { box-sizing: border-box; font: inherit; color: inherit; border: 0; border-radius: 0; outline: 0; padding: 0; margin: 0; }
    input[type=text] { width: 100%; height: 31px; padding-left: 6px; background: #5c5c5c; }
    output { padding-left: 6px; overflow: hidden; white-space: nowrap; }
    .drop { position: relative; flex: 1; min-width: 0; display: flex; background: #5c5c5c; }
    .drop svg { position: absolute; right: 7px; top: 12px; }
    select { width: 100%; height: 31px; padding: 0 25px 0 6px; background: none; appearance: none; }
    .layer { flex: 1; display: flex; align-items: center; background: #5c5c5c; }
    .layer i { width: 23px; height: 23px; border: 1px solid #fff; background: #000; }
    .swatch { width: 48px; height: 31px; background: #565656; border: 1px solid #3f3f3f; border-bottom-color: #777; display: grid; place-items: center; }
    .swatch rhino-icon { height: 28px; }
    .num { flex: 1; display: flex; height: 28px; }
    .num input { height: 28px; width: 80px; }
    .num > span { display: grid; gap: 2px; flex: 1; margin-left: 2px; }
    .num button { background: #5c5c5c; display: grid; place-items: center; height: 13px; }
    .line { height: 34px; border: 2px solid #828282; background: none; }
    .dots { width: 36px; margin-left: auto; }
    .wide { width: 100%; color: #808080; }
    input[type=checkbox] { appearance: none; width: 22px; height: 21px; margin-left: 2px; border: 2px solid #929292; }
  </style>
  <label for="${id}">${el.getAttribute('label')}</label><div class="box">${control}</div>`;
});

define('rhino-section', `
  <style>
    :host { display: block; }
    h2 { margin: 0; height: 38px; box-sizing: border-box; line-height: 36px; font-size: 23px; font-weight: 400; border-bottom: 1px solid #505050; }
  </style>
  <h2><slot name="title"></slot></h2><slot></slot>`);

define('rhino-properties', `
  <style>
    :host { display: flex; flex-direction: column; width: 300px; margin: 4px 3px 0 0; background: #323232; border-radius: 8px 8px 0 0; overflow: hidden; }
    header { flex: none; display: flex; justify-content: space-between; align-items: center; box-sizing: border-box; height: 30px; padding-left: 6px; border-bottom: 1px solid #444; line-height: 26px; color: #8f8f8f; }
    header rhino-icon { width: 32px; height: 32px; }
    .main { flex: 1; min-height: 0; display: flex; }
    .page { flex: 1; min-width: 0; padding: 6px 0 0 6px; }
    .kinds { display: flex; gap: 6px; margin: 0 0 20px 3px; }
    .kinds button { width: 42px; height: 42px; padding: 0; border: 0; background: none; }
    .kinds .on { background: #405591; --hole: #405591; }
    .scroll { width: 12px; height: 381px; margin: 65px 13px 0 14px; border-radius: 6px; background: #808080; }
    .side { width: 30px; display: flex; flex-direction: column; }
    .side button { display: block; width: 30px; height: 54px; padding: 0; border: 0; background: #444; }
    .side button rhino-icon { width: 30px; height: 54px; }
    .side .before { border-radius: 0 0 0 8px; }
    .side .joint { background: #323232; }
    .side .back { background: #444; }
    .side .on { background: #323232; border-radius: 0 8px 8px 0; }
    .side .after { border-radius: 8px 0 0 0; }
    .side i { flex: 1; background: #444; }
  </style>
  <header><span>属性:物件</span><rhino-icon name="cog"></rhino-icon></header>
  <div class="main">
    <div class="page">
      <div class="kinds"><button class="on" aria-label="object"><rhino-icon name="wheel"></rhino-icon></button><button aria-label="curve"><rhino-icon name="pipe"></rhino-icon></button><button aria-label="texture"><rhino-icon name="cylinder"></rhino-icon></button></div>
      <rhino-section><span slot="title">物件</span>
        <rhino-field label="类型" kind="text" value="封闭的曲线"></rhino-field>
        <rhino-field label="名称" kind="input"></rhino-field>
        <rhino-field label="图层" kind="layer" value="默认"></rhino-field>
        <rhino-field label="显示颜色" kind="color" value="以图层"></rhino-field>
        <rhino-field label="显示模式" kind="select" value="通过视图"></rhino-field>
        <rhino-field label="线型" kind="select" value="以图层"></rhino-field>
        <rhino-field label="线型缩放比" kind="number" value="1.000"></rhino-field>
        <rhino-field label="打印颜色" kind="color" value="以图层"></rhino-field>
        <rhino-field label="打印线宽" kind="select" value="以图层"></rhino-field>
        <rhino-field label="剖面样式" kind="select" value="以图层"></rhino-field>
        <rhino-field label="超链接" kind="dots"></rhino-field>
      </rhino-section>
      <rhino-section><span slot="title">渲染网格设置</span>
        <rhino-field label="自定义网格" kind="check"></rhino-field>
        <rhino-field label="设置" kind="button" value="调整"></rhino-field>
      </rhino-section>
      <rhino-section><span slot="title">渲染</span></rhino-section>
    </div>
    <div class="scroll"></div>
    <div class="side">
      <div class="joint"><button class="before" aria-label="layers"><rhino-icon name="cake"></rhino-icon></button></div>
      <div class="back"><button class="on" aria-label="properties"><rhino-icon name="wheel" scale="0.9"></rhino-icon></button></div>
      <div class="joint"><button class="after" aria-label="display"><rhino-icon name="monitor" scale="1.3"></rhino-icon></button></div>
      <button aria-label="help"><rhino-icon name="helpPane" scale="1.4"></rhino-icon></button>
      <i></i>
    </div>
  </div>`);

define('rhino-statusbar', `
  <style>
    :host { display: flex; align-items: center; height: 33px; margin-right: 3px; border-bottom: 2px solid #444; background: #323232; color: #bdbdbd; white-space: nowrap; }
    span { padding-top: 3px; }
    button { box-sizing: border-box; height: 31px; border: 0; border-radius: 3px; padding: 3px 11px 0; background: none; color: inherit; font: inherit; }
    .on { background: #405591; color: #f0f0f0; font-weight: bold; }
    .x { width: 128px; }
    .y { width: 158px; }
    .z { width: 132px; }
    .plane { width: 151px; box-sizing: border-box; padding-left: 26px; }
    .unit { width: 101px; }
    .layer { display: flex; align-items: center; gap: 8px; flex: 1; }
    .layer i { width: 22px; height: 23px; border: 1px solid #fff; background: #000; }
    .modes { display: flex; gap: 5px; width: 906px; }
    .modes svg { flex: none; margin: 7px 0 0 12px; }
    .modes .auto { overflow: hidden; width: 176px; padding: 3px 0 0; margin-left: 12px; text-align: left; }
    .modes .auto + svg { margin-left: 0; }
  </style>
  <span class="plane">工作平面</span><span class="x">x 146.192</span><span class="y">y 371.946</span><span class="z">z 0</span><span class="unit">毫米</span>
  <span class="layer"><i></i>默认</span>
  <div class="modes"><button>锁定格点</button><button>正交</button><button class="on">平面模式</button><button>物件锁点</button><button class="on">智慧轨迹</button><button class="on">操作轴 (工作平面)</button>
    <svg width="13" height="18"><path d="M3 9V4Q6 -1 10 4V9" fill="none" stroke="#555" stroke-width="2"/><rect y="8" width="13" height="10" fill="#eee"/></svg>
    <button class="auto">自动对齐工作平面 (物件)</button>
    <svg width="21" height="21"><path d="M0 0H21V21H0ZM11 5V16H16V5Z" fill="#d0d0d0" fill-rule="evenodd"/></svg></div>`);

define('rhino-app', `
  <style>
    :host { display: flex; flex-direction: column; box-sizing: border-box; height: 100vh; padding: 2px 2px 3px 0; background: #808080; position: relative; overflow: hidden; }
    .window { flex: 1; min-height: 0; display: flex; flex-direction: column; background: #444; border-radius: 0 8px 8px 0; overflow: hidden; }
    .head { background: #323232; }
    .work { flex: 1; min-height: 0; display: flex; }
    .left { width: 143px; display: flex; flex-direction: column; gap: 3px; padding-top: 4px; }
    .credit { position: absolute; right: 6px; bottom: 8px; font-size: 36px; line-height: 50px; color: rgba(215, 215, 215, .8); }
  </style>
  <div class="window">
    <div class="head"><rhino-titlebar></rhino-titlebar><rhino-menubar></rhino-menubar></div>
    <rhino-command></rhino-command>
    <rhino-toolbar></rhino-toolbar>
    <div class="work">
      <div class="left"><rhino-toolbox></rhino-toolbox><rhino-osnap></rhino-osnap></div>
      <rhino-views></rhino-views>
      <rhino-properties></rhino-properties>
    </div>
    <rhino-statusbar></rhino-statusbar>
  </div>
  <div class="credit">CSDN @即安莉</div>`);
})();
</script>
</body>
</html>
